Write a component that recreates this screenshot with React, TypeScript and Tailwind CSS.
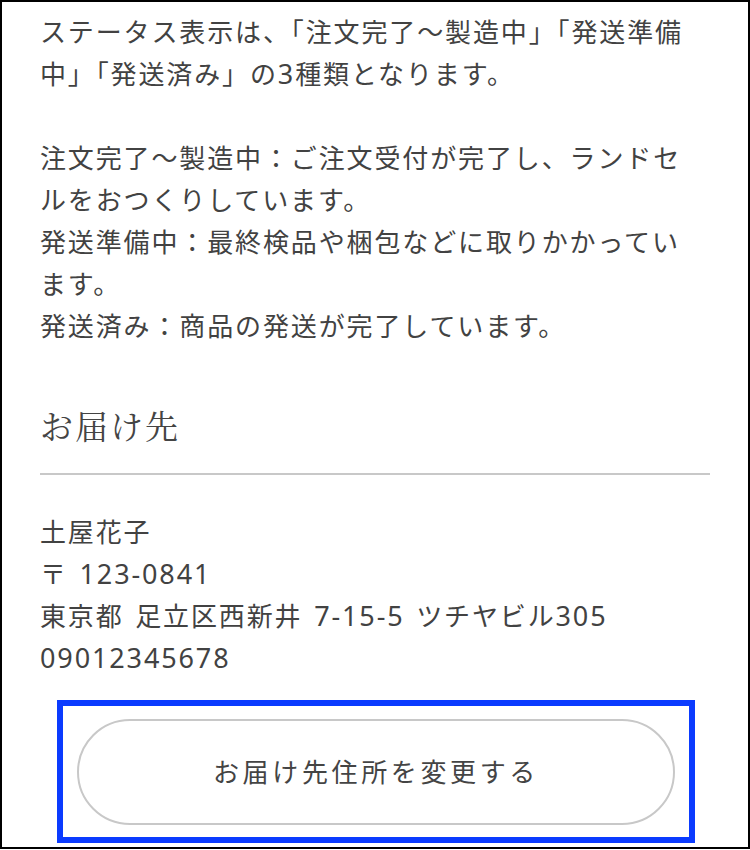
import type { ReactNode } from 'react';

// digit runs are set a little larger than the kana around them
function T({ text }: { text: string }) {
    const parts = text.split(/([0-9-]+)/);
    const out: ReactNode[] = parts.map((part, i) => {
        if (!part) return null;
        if (/^[0-9-]+$/.test(part))
            return (
                <span key={i} className="text-[27px] leading-none">
                    {part}
                </span>
            );
        return part;
    });
    return <>{out}</>;
}

const statusLines = [
    'ステータス表示は、「注文完了～製造中」「発送準備',
    '中」「発送済み」の3種類となります。',
    '',
    '注文完了～製造中：ご注文受付が完了し、ランドセ',
    'ルをおつくりしています。',
    '発送準備中：最終検品や梱包などに取りかかってい',
    'ます。',
    '発送済み：商品の発送が完了しています。',
];

const addressLines = ['土屋花子', '〒 123-0841', '東京都 足立区西新井 7-15-5 ツチヤビル305', '09012345678'];

export default function App() {
    return (
        <div
            className="h-[849px] w-[750px] overflow-hidden border-2 border-black bg-white text-[#424242]"
            style={{ fontFamily: '"Noto Sans", "Noto Sans CJK JP", sans-serif' }}
        >
            <div className="px-[38px] pt-[9px]">
                <div className="text-[26px] leading-[42px] tracking-[0.072em]">
                    {statusLines.map((line, i) => (
                        <div key={i} className="h-[42px] whitespace-nowrap">
                            <T text={line} />
                        </div>
                    ))}
                </div>

                <div className="mt-[54px] border-b-2 border-[#c8c8c8] pb-[24px]">
                    <h2
                        className="text-[33px] leading-[48px] tracking-[0.06em] text-[#444]"
                        style={{ fontFamily: '"Noto Serif CJK JP", "Liberation Serif", serif' }}
                    >
                        お届け先
                    </h2>
                </div>

                <div className="mt-[36px] text-[26px] leading-[42px] tracking-[0.072em] [word-spacing:3px]">
                    {addressLines.map((line) => (
                        <div key={line} className="h-[42px] whitespace-nowrap">
                            <T text={line} />
                        </div>
                    ))}
                </div>

                <div className="ml-[17px] mt-[21px] w-[638px] border-[6px] border-[#0b3bff] px-[14px] pb-[12px] pt-[13px]">
                    <button className="flex h-[106px] w-full items-center justify-center rounded-full border-2 border-[#c8c8c8] bg-white text-[26px] tracking-[0.14em] text-[#444]">
                        お届け先住所を変更する
                    </button>
                </div>
            </div>
        </div>
    );
}
